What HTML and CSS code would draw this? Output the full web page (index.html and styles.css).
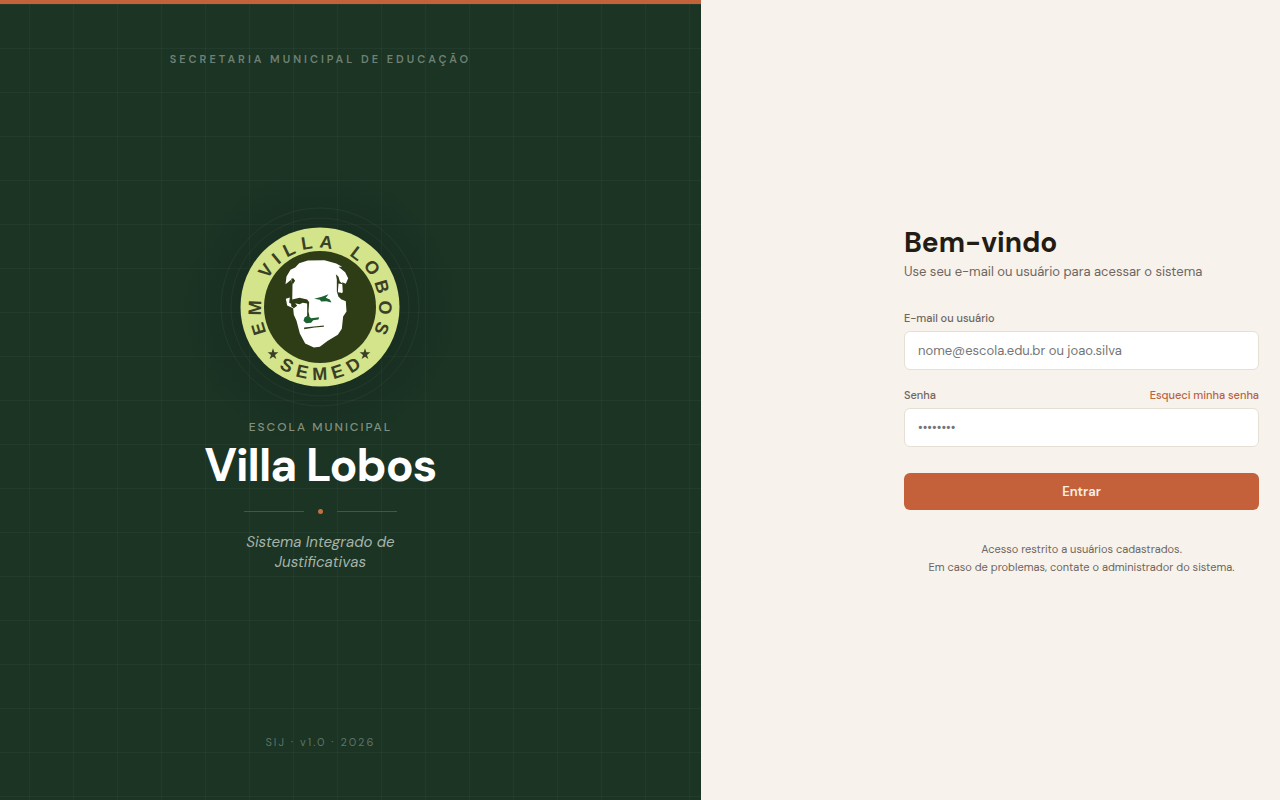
FILE: index.html
```html
<!DOCTYPE html>
<html lang="pt-BR">
<head>
<meta charset="utf-8">
<meta name="viewport" content="width=device-width, initial-scale=1">
<title>Villa Lobos</title>
<link rel="stylesheet" href="styles.css">
</head>
<body>
<div class="page">
  <section class="brand">
    <p class="brand-top">Secretaria Municipal de Educação</p>
    <div class="brand-main">
      <svg class="crest" viewBox="0 0 200 200" role="img" aria-label="EM Villa Lobos, SEMED">
        <defs>
          <path id="arc-top" d="M100 159A59 59 0 0 1 100 41A59 59 0 0 1 100 159"/>
          <path id="arc-bottom" d="M27 100A73 73 0 0 0 173 100"/>
          <path id="star" d="M0-17L4-5L16-5L6 3L10 15L0 8L-10 15L-6 3L-16-5L-4-5Z"/>
        </defs>
        <circle class="halo" cx="100" cy="100" r="99"/>
        <circle class="halo" cx="100" cy="100" r="89"/>
        <circle class="ring" cx="100" cy="100" r="79.5"/>
        <circle class="disc" cx="100" cy="100" r="56"/>
        <text class="ring-text"><textPath href="#arc-top" startOffset="66">EM</textPath></text>
        <text class="ring-text"><textPath href="#arc-top" startOffset="121">VILLA</textPath></text>
        <text class="ring-text"><textPath href="#arc-top" startOffset="215">LOBOS</textPath></text>
        <text class="ring-text"><textPath href="#arc-bottom" startOffset="71">SEMED</textPath></text>
        <g transform="translate(54.5 44.5) scale(.3333)">
          <path class="face" d="M62 48L74 35L100 27L150 26L185 36L203 46L192 46L212 62L221 80L214 97L203 92L205 122L195 128L200 143L214 149L216 180L206 195L202 232L190 250L160 268L136 286L118 288L92 276L76 246L66 208L58 190L56 170L38 162L34 142L46 138L44 154L53 158L54 100L50 85L33 98L36 75L48 55Z"/>
          <path class="shade" d="M50 145L75 139L98 144L104 152L102 180L105 195L98 197L98 156L85 154L75 158L62 155L68 163L58 170L50 164ZM184 68L192 76L196 90L206 98L192 96L190 122L200 124L201 144L192 136L187 120L187 84ZM89 228L148 222L148 226L120 228L89 233ZM50 82L56 80L62 88L54 100Z"/>
          <path class="green" d="M119 142L142 136L162 128L154 139L166 144L171 153L156 149L140 150L136 145ZM90 198L100 192L110 200L134 197L132 204L116 206L110 214L95 215L87 208Z"/>
        </g>
        <use class="star" href="#star" transform="translate(53 147) scale(.3333)"/>
        <use class="star" href="#star" transform="translate(145 147) scale(.3333)"/>
      </svg>
      <p class="eyebrow">Escola Municipal</p>
      <h1 class="school">Villa Lobos</h1>
      <div class="divider"><span class="dot"></span></div>
      <p class="tagline">Sistema Integrado de Justificativas</p>
    </div>
    <p class="version">SIJ · v1.0 · 2026</p>
  </section>
  <main class="access">
    <form class="form">
      <h2 class="title">Bem-vindo</h2>
      <p class="subtitle">Use seu e-mail ou usuário para acessar o sistema</p>
      <div class="field">
        <div class="field-head"><label for="user">E-mail ou usuário</label></div>
        <input class="input" id="user" type="text" placeholder="nome@escola.edu.br ou joao.silva">
      </div>
      <div class="field">
        <div class="field-head"><label for="pass">Senha</label><a class="forgot" href="#">Esqueci minha senha</a></div>
        <input class="input" id="pass" type="password" placeholder="••••••••">
      </div>
      <button class="submit" type="submit">Entrar</button>
      <p class="note">Acesso restrito a usuários cadastrados.<br>Em caso de problemas, contate o administrador do sistema.</p>
    </form>
  </main>
</div>
</body>
</html>
```
FILE: styles.css
```css
* { box-sizing: border-box; }
body, h1, h2, p { margin: 0; }
body { font-family: "DM Sans", Inter, "Liberation Sans", sans-serif; background: #f7f2eb; color: #231c14; }
.page { display: grid; grid-template-columns: 1.21fr 1fr; min-height: 100vh; }

.brand {
  display: flex; flex-direction: column; align-items: center; justify-content: space-between;
  padding: 47px 60px 50px 0;
  border-top: 4px solid #c4623a;
  background:
    radial-gradient(circle at 320px 304px, #0a191633 80px, #0a191600 140px),
    linear-gradient(90deg, #ffffff09 1px, transparent 1px) 29px 0 / 44px 44px,
    linear-gradient(#ffffff09 1px, transparent 1px) 0 44px / 44px 44px,
    #1b3424;
  color: #fff;
  text-align: center;
}
.brand-top, .eyebrow, .version { font-size: 11px; line-height: 16px; }
.brand-top { font-weight: 600; letter-spacing: 3px; text-transform: uppercase; color: #6f8175; }
.brand-main { display: flex; flex-direction: column; align-items: center; padding-bottom: 22px; }
.crest { width: 200px; height: 200px; }
.halo { fill: none; stroke: #ffffff0c; }
.ring { fill: #d3e48a; }
.disc { fill: #2e3d15; }
.ring-text { font: bold 18px "Liberation Sans", sans-serif; letter-spacing: 6px; fill: #3a3f25; }
.face { fill: #fff; }
.shade { fill: #2e3d15; }
.green { fill: #1c6130; }
.star { fill: #3a3f25; }
.eyebrow { margin-top: 12px; font-size: 12px; font-weight: 500; letter-spacing: 2px; text-transform: uppercase; color: #82917f; }
.school { margin-top: 4px; font-size: 46px; line-height: 52px; font-weight: 700; letter-spacing: -1px; }
.divider { display: flex; align-items: center; gap: 14px; margin-top: 18px; }
.divider::before, .divider::after { content: ""; width: 60px; height: 1px; background: #425748; }
.dot { width: 5px; height: 5px; border-radius: 50%; background: #c4703f; }
.tagline { max-width: 180px; margin-top: 18px; font-size: 15px; line-height: 20px; font-style: italic; color: #a7b3aa; }
.version { letter-spacing: 2px; color: #5f7266; }

.access { display: flex; align-items: center; justify-content: flex-end; padding: 24px 21px; }
.form { width: 100%; max-width: 355px; }
.title { font-size: 28px; line-height: 36px; font-weight: 700; }
.subtitle { margin: 1px 0 27px; font-size: 13px; line-height: 20px; color: #6e665f; }
.field { margin-bottom: 16px; }
.field-head { display: flex; justify-content: space-between; margin-bottom: 4px; font-size: 11px; line-height: 18px; font-weight: 500; color: #6e665f; }
.forgot { color: #b9633f; text-decoration: none; }
.input {
  display: block; width: 100%; height: 39px; padding: 0 13px;
  border: 1px solid #e5dfd5; border-radius: 6px; background: #fff;
  font: inherit; font-size: 13px; color: #231c14;
}
.input::placeholder { color: #757575; opacity: 1; }
.submit {
  display: block; width: 100%; height: 37px; margin-top: 26px; padding: 0;
  border: 0; border-radius: 6px; background: #c4613a; color: #fbeee3;
  font: inherit; font-size: 13px; font-weight: 600;
}
.note { margin-top: 30px; font-size: 11px; line-height: 18px; text-align: center; color: #6e665f; }
```
